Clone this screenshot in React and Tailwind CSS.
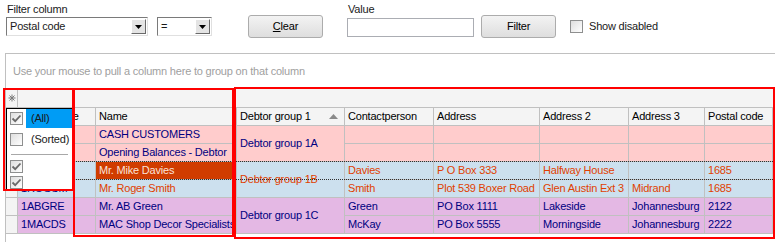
import React from 'react';

const font = "font-['Liberation_Sans',sans-serif] text-[11px] tracking-[-0.2px]";
const cols = 'grid grid-cols-[12px_78px_141px_108px_89px_106px_89px_76px_68px]';

const groups = [
  {
    bg: 'bg-[#ffcccc]',
    text: 'text-[#000080]',
    label: 'Debtor group 1A',
    rows: [
      { code: 'CASH', name: 'CASH CUSTOMERS', c: '', a: '', a2: '', a3: '', pc: '' },
      { code: 'OPENBAL', name: 'Opening Balances - Debtor', c: '', a: '', a2: '', a3: '', pc: '' },
    ],
  },
  {
    bg: 'bg-[#cce0ee]',
    text: 'text-[#e04000]',
    label: 'Debtor group 1B',
    rows: [
      { code: '1MIKED', name: 'Mr. Mike Davies', c: 'Davies', a: 'P O Box 333', a2: 'Halfway House', a3: '', pc: '1685', selected: true },
      { code: '1ROGSM', name: 'Mr. Roger Smith', c: 'Smith', a: 'Plot 539 Boxer Road', a2: 'Glen Austin Ext 3', a3: 'Midrand', pc: '1685' },
    ],
  },
  {
    bg: 'bg-[#e4b8e4]',
    text: 'text-[#000080]',
    label: 'Debtor group 1C',
    rows: [
      { code: '1ABGRE', name: 'Mr. AB Green', c: 'Green', a: 'PO Box 1111', a2: 'Lakeside', a3: 'Johannesburg', pc: '2122' },
      { code: '1MACDS', name: 'MAC Shop Decor Specialists', c: 'McKay', a: 'PO Box 5555', a2: 'Morningside', a3: 'Johannesburg', pc: '2222' },
    ],
  },
];

const headers = ['', 'Debtor code', 'Name', 'Debtor group 1', 'Contactperson', 'Address', 'Address 2', 'Address 3', 'Postal code'];

function Cell({ className = '', children }) {
  return (
    <div className={`border-r border-b border-[#c0c0c0] pl-[3px] flex items-center whitespace-nowrap overflow-hidden ${className}`}>
      {children}
    </div>
  );
}

function Check({ checked }) {
  return (
    <div className="w-[13px] h-[13px] border border-[#8e8f8f] bg-gradient-to-br from-[#dedede] to-white flex items-center justify-center shrink-0">
      {checked && (
        <svg width="11" height="11" viewBox="0 0 11 11">
          <path d="M1.5 5.5 L4.2 8.2 L9.5 2.5" fill="none" stroke="#6a6a6a" strokeWidth="1.8" />
        </svg>
      )}
    </div>
  );
}

function Combo({ width, value }) {
  return (
    <div className={`${width} h-[19px] border border-t-[#7a7a7a] border-l-[#7a7a7a] border-r-[#e0e0e0] border-b-[#e0e0e0] bg-white flex items-center`}>
      <span className="flex-1 pl-[3px] leading-none">{value}</span>
      <div className="w-[15px] h-[15px] mr-[1px] bg-[#e4e4e4] border border-t-white border-l-white border-r-[#6a6a6a] border-b-[#6a6a6a] flex items-center justify-center">
        <svg width="7" height="4" viewBox="0 0 7 4">
          <path d="M0 0 H7 L3.5 4 Z" fill="#000" />
        </svg>
      </div>
    </div>
  );
}

function Btn({ children }) {
  return (
    <button className="w-[75px] h-[23px] rounded-[3px] border border-[#acacac] bg-gradient-to-b from-[#f3f3f3] to-[#dedede] text-black">
      {children}
    </button>
  );
}

export default function App() {
  return (
    <div className={`relative w-[775px] h-[242px] bg-white overflow-hidden text-[#1a1a1a] ${font}`}>
      {/* filter toolbar */}
      <div className="flex h-[53px]">
        <div className="ml-[6px] mt-[2px] flex flex-col">
          <span className="h-[15px] leading-[15px] pl-[1px]">Filter column</span>
          <div className="flex gap-[9px]">
            <Combo width="w-[142px]" value="Postal code" />
            <Combo width="w-[55px]" value="=" />
          </div>
        </div>
        <div className="ml-[36px] mt-[15px]">
          <Btn>
            <span className="underline">C</span>lear
          </Btn>
        </div>
        <div className="ml-[24px] mt-[2px] flex flex-col">
          <span className="h-[15px] leading-[15px] pl-[1px]">Value</span>
          <div className="mt-[1px] w-[127px] h-[19px] border border-[#abadb3] bg-white" />
        </div>
        <div className="ml-[7px] mt-[15px]">
          <Btn>Filter</Btn>
        </div>
        <div className="ml-[14px] mt-[15px] h-[23px] flex items-center gap-[6px]">
          <Check />
          <span>Show disabled</span>
        </div>
      </div>

      {/* grid */}
      <div className="ml-[5px] border-l border-[#c0c0c0] h-[189px]">
        <div className="h-[36px] border-t border-b border-[#c0c0c0] flex items-center pl-[7px] text-[#a0a0a0]">
          Use your mouse to pull a column here to group on that column
        </div>
        <div className="h-[19px] bg-[#f4f4f4] border-b border-[#c0c0c0] flex">
          <div className="w-[12px] h-full border-r border-[#c0c0c0] flex items-center justify-center">
            <svg width="8" height="8" viewBox="0 0 8 8">
              <path d="M4 0.5 V7.5 M0.5 4 H7.5 M1.5 1.5 L6.5 6.5 M6.5 1.5 L1.5 6.5" stroke="#7a7a7a" strokeWidth="1" />
            </svg>
          </div>
        </div>
        <div className={`${cols} h-[18px] bg-[#f4f4f4] text-black`}>
          {headers.map((h, i) => (
            <Cell key={i} className={i === 3 ? 'justify-between pr-[6px]' : ''}>
              {h}
              {i === 3 && (
                <svg width="9" height="5" viewBox="0 0 9 5">
                  <path d="M0 5 L4.5 0 L9 5 Z" fill="#8a8a8a" />
                </svg>
              )}
            </Cell>
          ))}
        </div>
        <div className={`${cols} auto-rows-[18px]`}>
          {groups.map((g) =>
            g.rows.flatMap((r, i) => [
              <Cell key={r.code + 'i'} className="bg-[#f4f4f4]" />,
              <Cell key={r.code + 'c'} className={`${g.bg} text-[#000080]`}>{r.code}</Cell>,
              <Cell key={r.code + 'n'} className={r.selected ? 'bg-[#d03c00] text-[#fbe2d8]' : `${g.bg} ${g.text}`}>{r.name}</Cell>,
              ...(i === 0 ? [<Cell key={r.code + 'g'} className={`row-span-2 ${g.bg} ${g.text}`}>{g.label}</Cell>] : []),
              <Cell key={r.code + 'p'} className={`${g.bg} ${g.text}`}>{r.c}</Cell>,
              <Cell key={r.code + 'a'} className={`${g.bg} ${g.text}`}>{r.a}</Cell>,
              <Cell key={r.code + 'b'} className={`${g.bg} ${g.text}`}>{r.a2}</Cell>,
              <Cell key={r.code + 'd'} className={`${g.bg} ${g.text}`}>{r.a3}</Cell>,
              <Cell key={r.code + 'e'} className={`${g.bg} ${g.text}`}>{r.pc}</Cell>,
            ])
          )}
        </div>
      </div>

      {/* focused row dotted frame */}
      <div className="absolute left-[18px] top-[161px] w-[755px] h-[1px] bg-[linear-gradient(to_right,#303030_50%,transparent_50%)] bg-[length:2px_1px]" />
      <div className="absolute left-[18px] top-[179px] w-[755px] h-[1px] bg-[linear-gradient(to_right,#303030_50%,transparent_50%)] bg-[length:2px_1px]" />

      {/* column filter dropdown */}
      <div className="absolute left-[6px] top-[108px] w-[67px] h-[82px] border border-black bg-white text-[#1a1a1a]">
        <div className="flex items-center h-[19px]">
          <div className="ml-[3px]"><Check checked /></div>
          <span className="ml-[3px] flex-1 h-full pl-[5px] bg-[#009cf5] flex items-center">(All)</span>
        </div>
        <div className="flex items-center h-[20px] mt-[1px]">
          <div className="ml-[3px]"><Check /></div>
          <span className="ml-[8px]">(Sorted)</span>
        </div>
        <div className="mx-[4px] mt-[5px] h-[1px] bg-[#a8a8a8]" />
        <div className="flex items-center h-[16px] mt-[3px]">
          <div className="ml-[3px]"><Check checked /></div>
        </div>
        <div className="flex items-center h-[16px]">
          <div className="ml-[3px]"><Check checked /></div>
        </div>
      </div>

      {/* annotation boxes */}
      <div className="absolute left-[3px] top-[88px] w-[71px] h-[103px] border-2 border-[#ff0000]" />
      <div className="absolute left-[73px] top-[88px] w-[161px] h-[149px] border-2 border-[#ff0000]" />
      <div className="absolute left-[234px] top-[87px] w-[541px] h-[152px] border-2 border-[#ff0000]" />
    </div>
  );
}
